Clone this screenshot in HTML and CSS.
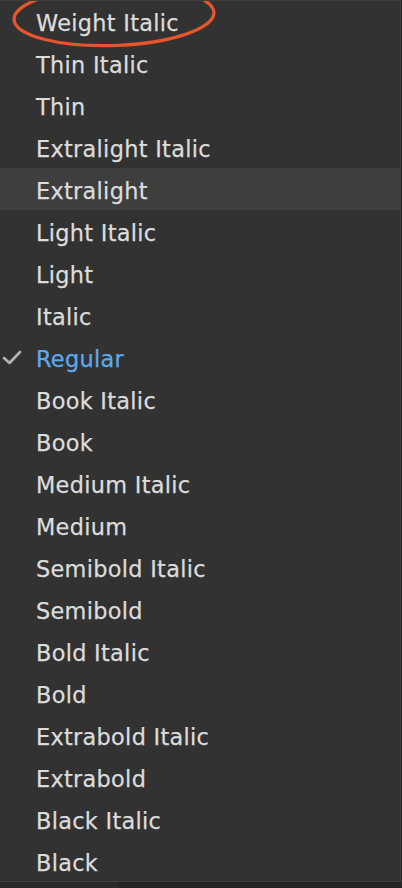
FILE: index.html
```html
<!DOCTYPE html>
<html>
<head>
<meta charset="utf-8">
<link rel="stylesheet" href="styles.css">
</head>
<body>
<div class="menu">
  <ul class="list">
    <li class="item">Weight Italic</li>
    <li class="item">Thin Italic</li>
    <li class="item">Thin</li>
    <li class="item">Extralight Italic</li>
    <li class="item hover">Extralight</li>
    <li class="item">Light Italic</li>
    <li class="item">Light</li>
    <li class="item">Italic</li>
    <li class="item selected"><svg class="check" viewBox="0 0 20 16" width="20" height="16"><path d="M2 9 L7.5 14 L18 3" fill="none" stroke="#b4b4b4" stroke-width="2.6" stroke-linecap="round" stroke-linejoin="round"/></svg>Regular</li>
    <li class="item">Book Italic</li>
    <li class="item">Book</li>
    <li class="item">Medium Italic</li>
    <li class="item">Medium</li>
    <li class="item">Semibold Italic</li>
    <li class="item">Semibold</li>
    <li class="item">Bold Italic</li>
    <li class="item">Bold</li>
    <li class="item">Extrabold Italic</li>
    <li class="item">Extrabold</li>
    <li class="item">Black Italic</li>
    <li class="item">Black</li>
  </ul>
  <svg class="circle" width="240" height="60" viewBox="0 0 240 60"><ellipse cx="114" cy="15" rx="100" ry="29.5" transform="rotate(-2 114 15)" fill="none" stroke="#e6552d" stroke-width="3.2"/></svg>
</div>
<div class="below">
  <div class="below-left"></div>
</div>
</body>
</html>
```
FILE: styles.css
```css
html, body {
  margin: 0;
  padding: 0;
  background: #252525;
  width: 402px;
  height: 888px;
  overflow: hidden;
}
.menu {
  position: relative;
  width: 400px;
  height: 880px;
  background: #323232;
  border-top: 1px solid #3d3d3d;
  border-right: 1px solid #3e3e3e;
  border-bottom: 1px solid #404040;
  overflow: hidden;
}
.list {
  list-style: none;
  margin: -1px 0 0 0;
  padding: 0;
}
.item {
  position: relative;
  height: 42px;
  box-sizing: border-box;
  padding-top: 3px;
  display: flex;
  align-items: center;
  padding-left: 36px;
  font-family: "DejaVu Sans", sans-serif;
  font-size: 22.4px;
  letter-spacing: 0.3px;
  color: #dcdcdc;
  -webkit-text-stroke: 0.25px #dcdcdc;
}
.hover {
  background: #3e3e3e;
}
.selected {
  color: #5ea9ee;
  -webkit-text-stroke: 0.25px #5ea9ee;
}
.check {
  position: absolute;
  left: 2px;
  top: 13px;
}
.circle {
  position: absolute;
  left: 0;
  top: 0;
}
.below {
  display: flex;
  height: 7px;
}
.below-left {
  width: 118px;
  background: #2a2a2a;
}
```
